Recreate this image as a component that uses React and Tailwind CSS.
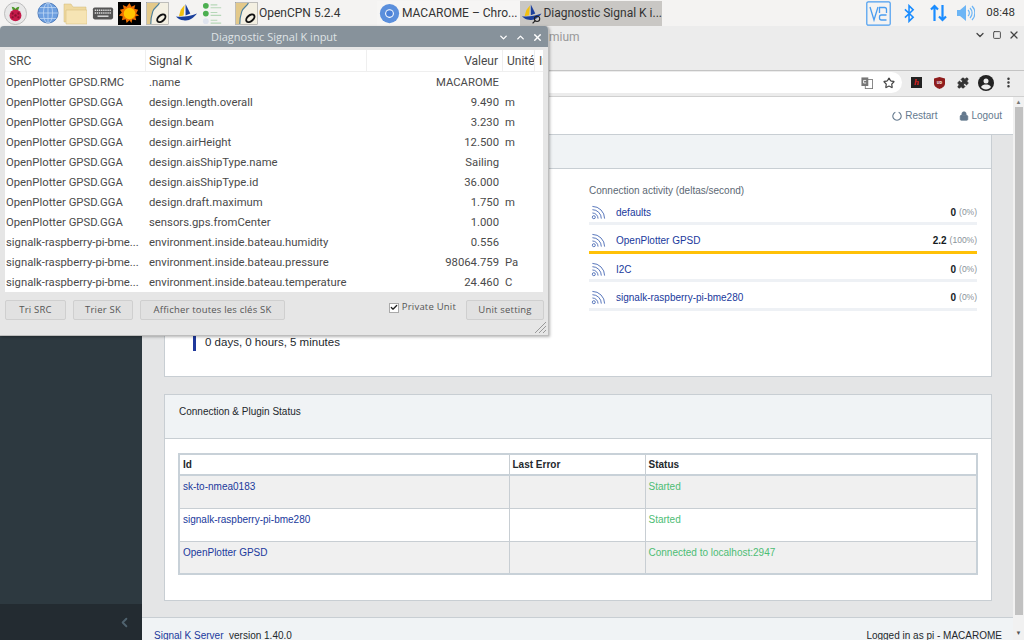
import React from 'react';
import { ChevronDown, ChevronUp, X, Square, Star, Puzzle, EllipsisVertical, Lock, ChevronLeft, Check } from 'lucide-react';

const rows = [
  ['OpenPlotter GPSD.RMC', '.name', 'MACAROME', ''],
  ['OpenPlotter GPSD.GGA', 'design.length.overall', '9.490', 'm'],
  ['OpenPlotter GPSD.GGA', 'design.beam', '3.230', 'm'],
  ['OpenPlotter GPSD.GGA', 'design.airHeight', '12.500', 'm'],
  ['OpenPlotter GPSD.GGA', 'design.aisShipType.name', 'Sailing', ''],
  ['OpenPlotter GPSD.GGA', 'design.aisShipType.id', '36.000', ''],
  ['OpenPlotter GPSD.GGA', 'design.draft.maximum', '1.750', 'm'],
  ['OpenPlotter GPSD.GGA', 'sensors.gps.fromCenter', '1.000', ''],
  ['signalk-raspberry-pi-bme...', 'environment.inside.bateau.humidity', '0.556', ''],
  ['signalk-raspberry-pi-bme...', 'environment.inside.bateau.pressure', '98064.759', 'Pa'],
  ['signalk-raspberry-pi-bme...', 'environment.inside.bateau.temperature', '24.460', 'C'],
];

const activity = [
  ['defaults', '0', '(0%)', false],
  ['OpenPlotter GPSD', '2.2', '(100%)', true],
  ['I2C', '0', '(0%)', false],
  ['signalk-raspberry-pi-bme280', '0', '(0%)', false],
];

const plugins = [
  ['sk-to-nmea0183', 'Started', 'bg-[#f0f0f0]'],
  ['signalk-raspberry-pi-bme280', 'Started', 'bg-white'],
  ['OpenPlotter GPSD', 'Connected to localhost:2947', 'bg-[#f0f0f0]'],
];

function ChartIcon({ className }) {
  return (
    <svg viewBox="0 0 24 24" className={className}>
      <rect x="0.5" y="0.5" width="23" height="23" fill="#f4f0e2" stroke="#888" strokeWidth="0.5" />
      <path d="M1 1h13c-2 4-6 5-7 9-1 3-2 8-2 13H1z" fill="#e3c98a" />
      <path d="M14 1c-2 4-6 5-7 9-1 3-2 8-2 13" fill="none" stroke="#4c7f9c" strokeWidth="1.2" />
      <ellipse cx="16" cy="17" rx="5" ry="3" transform="rotate(-40 16 17)" fill="none" stroke="#111" strokeWidth="2" />
    </svg>
  );
}

function BoatIcon({ className, lens }) {
  return (
    <svg viewBox="0 0 24 24" className={className}>
      <path d="M10 3L9 14l-5 1 2-7z" fill="#f2c010" />
      <path d="M11 2l5 10-5 2z" fill="#1a3f9c" />
      <path d="M1 15c6 1 14 0 22-3-4 5-8 8-14 7-3 0-6-2-8-4z" fill="#1a3f9c" />
      {lens && <circle cx="18" cy="18" r="3" fill="none" stroke="#222" strokeWidth="1.2" />}
      {lens && <path d="M16 20l-3 3" stroke="#222" strokeWidth="1.4" />}
    </svg>
  );
}

function FeedIcon() {
  return (
    <svg viewBox="0 0 16 16" className="w-[15px] h-[15px] ml-[2px] mr-[10px] text-[#4f6fb8]" fill="none" stroke="currentColor" strokeWidth="1">
      <circle cx="3" cy="13" r="1.6" />
      <path d="M1.5 8.5a6 6 0 0 1 6 6" />
      <path d="M1.5 5a9.5 9.5 0 0 1 9.500 9.500" />
      <path d="M1.5 1.500a13 13 0 0 1 13 13" />
    </svg>
  );
}

function Taskbar() {
  return (
    <div className="h-[26px] bg-[#f4f3f2] flex items-center pl-[4px] text-[#333] font-['Roboto',sans-serif] text-[12px] whitespace-nowrap">
      <svg viewBox="0 0 24 24" className="w-[23px] h-[23px] mr-[10px]">
        <circle cx="12" cy="12" r="11.500" fill="#e8e8e8" stroke="#bbb" />
        <path d="M8 5c2 0 3 1 4 2 1-1 2-2 4-2l-1 3-3 1-3-1z" fill="#4c9a2a" />
        <circle cx="12" cy="14" r="6.200" fill="#c51a4a" />
        <circle cx="12" cy="14" r="1.300" fill="#8a0f30" />
        <circle cx="9" cy="12" r="1.200" fill="#8a0f30" />
        <circle cx="15" cy="12" r="1.200" fill="#8a0f30" />
        <circle cx="9" cy="16" r="1.200" fill="#8a0f30" />
        <circle cx="15" cy="16" r="1.200" fill="#8a0f30" />
      </svg>
      <svg viewBox="0 0 24 24" className="w-[22px] h-[22px] mr-[4px]">
        <circle cx="12" cy="12" r="11" fill="#6d9fe0" stroke="#4a78b8" />
        <path d="M1 12h22M12 1v22M3 6h18M3 18h18" stroke="#c6dbf5" strokeWidth="0.8" fill="none" />
        <ellipse cx="12" cy="12" rx="5" ry="11" fill="none" stroke="#c6dbf5" strokeWidth="0.8" />
      </svg>
      <svg viewBox="0 0 24 24" className="w-[24px] h-[24px] mr-[5px]">
        <path d="M1 3h7l2 3h13v15H1z" fill="#efd9a0" stroke="#d0b878" strokeWidth="0.5" />
        <path d="M3 9h21v14H3z" fill="#f6e4b4" stroke="#d0b878" strokeWidth="0.5" />
      </svg>
      <svg viewBox="0 0 24 24" className="w-[22px] h-[22px] mr-[4px]">
        <rect x="1" y="6" width="22" height="13" rx="2" fill="#555" />
        <path d="M3 9h18M3 12h18" stroke="#ddd" strokeWidth="1.600" strokeDasharray="1.500 0.800" />
        <path d="M6 15.500h12" stroke="#ddd" strokeWidth="1.600" />
      </svg>
      <svg viewBox="0 0 24 24" className="w-[23px] h-[23px] mr-[5px] bg-black">
        <path d="M12 1l2 4 4-2-1 4 4 1-2 4 3 2-4 1 1 4-4-1-1 4-2-3-3 3-1-4-4 1 1-4-4-1 3-3-2-3 4-1-1-4 4 2z" fill="#f07000" />
        <circle cx="12" cy="12" r="6" fill="#ffc400" />
      </svg>
      <ChartIcon className="w-[23px] h-[23px] mr-[6px]" />
      <BoatIcon className="w-[23px] h-[23px] mr-[4px]" />
      <svg viewBox="0 0 24 24" className="w-[23px] h-[23px] mr-[10px]">
        <circle cx="4" cy="4" r="3" fill="#4caf50" />
        <circle cx="4" cy="12" r="3" fill="#4caf50" />
        <circle cx="4" cy="20" r="3" fill="#dfe4ee" />
        <path d="M9 3h7M9 6h11M9 11h7M9 14h11M9 19h7M9 22h11" stroke="#b6d7b8" strokeWidth="1.200" />
      </svg>
      <div className="flex items-center h-[25px] w-[142px]">
        <ChartIcon className="w-[23px] h-[23px] mr-px" />
        <span>OpenCPN 5.2.4</span>
      </div>
      <div className="flex items-center h-[25px] w-[143px] pl-[2px] bg-[#f6f5f4]">
        <svg viewBox="0 0 24 24" className="w-[21px] h-[21px] mr-[2px]">
          <circle cx="12" cy="12" r="11" fill="#5b8fdc" />
          <circle cx="12" cy="12" r="5" fill="#fff" />
          <circle cx="12" cy="12" r="3.800" fill="#4a80d8" />
        </svg>
        <span>MACAROME – Chro...</span>
      </div>
      <div className="flex items-center h-[25px] w-[142px] pl-px bg-[#c9c7c4]">
        <BoatIcon lens className="w-[23px] h-[23px] mr-px" />
        <span>Diagnostic Signal K i...</span>
      </div>
      <div className="ml-auto flex items-center">
        <svg viewBox="0 0 25 25" className="w-[25px] h-[25px] mr-[13px] text-[#4a9df0]" fill="none" stroke="currentColor">
          <rect x="0.800" y="0.800" width="23.400" height="23.400" rx="1.500" strokeWidth="1.200" />
          <path d="M4 6l4 13 4-13" strokeWidth="1.300" />
          <path d="M13.500 12V6.500h5c1.500 0 2 1 2 2V12" strokeWidth="1.300" />
          <path d="M20.500 14h-5c-1.500 0-2 1-2 2v1c0 1 .5 2 2 2h5" strokeWidth="1.300" />
        </svg>
        <svg viewBox="0 0 12 20" className="w-[11px] h-[19px] mr-[15px] text-[#1a8cff]" fill="none" stroke="currentColor" strokeWidth="1.700">
          <path d="M1 5.500l9 8.500-4.500 4.500V1.500L10 6l-9 8.500" />
        </svg>
        <svg viewBox="0 0 17 18" className="w-[17px] h-[18px] mr-[9px] text-[#1a8cff]" fill="none" stroke="currentColor" strokeWidth="2.200">
          <path d="M4.500 17V2M1 5.500l3.500-3.500L8 5.500" />
          <path d="M12.500 1v15M9 12.500l3.500 3.500 3.500-3.500" />
        </svg>
        <svg viewBox="0 0 19 18" className="w-[19px] h-[18px] mr-[11px] text-[#6cb5f5]" fill="none" stroke="currentColor" strokeWidth="1.200">
          <path d="M1 6h3l6-5v16l-6-5H1z" fill="currentColor" stroke="none" />
          <path d="M12 6a4 4 0 0 1 0 6M14 4a7 7 0 0 1 0 10M16 2a10 10 0 0 1 0 14" />
        </svg>
        <span className="text-[11.5px] mr-[9px]">08:48</span>
      </div>
    </div>
  );
}

function ChromeTop() {
  return (
    <div className="h-[71px] bg-[#ececec] flex flex-col">
      <div className="h-[44px] flex items-start pt-[3px] pr-[4px] gap-[5px] text-[#444] font-['Roboto',sans-serif]">
        <span className="pl-[549px] mr-auto text-[12px] leading-[14px] mt-px text-[#999]">mium</span>
        <ChevronDown size={12} strokeWidth={2.500} />
        <Square size={12} strokeWidth={2.500} className="scale-75" />
        <X size={12} strokeWidth={2.500} />
      </div>
      <div className="flex-1 border-t border-[#c4c4c4] border-b border-b-[#d0d0d0] flex items-start pt-px pr-[4px] text-[#333]">
        <div className="flex-1 h-[21px] bg-white rounded-r-full ml-[549px] mr-[3px] flex items-center justify-end pr-[7px]">
          <svg viewBox="0 0 14 14" className="w-[12px] h-[12px] mr-[10px]">
            <rect x="5" y="3" width="8.500" height="10.500" fill="#fff" stroke="#777" />
            <rect x="0.500" y="0.500" width="8" height="10" fill="#777" />
            <path d="M6 4H3v3h3" fill="none" stroke="#fff" />
          </svg>
          <Star size={12} strokeWidth={2.400} className="text-[#444]" />
        </div>
        <div className="w-[23px] h-[21px] flex items-center justify-center">
          <div className="w-[11px] h-[11px] bg-[#222] flex items-center justify-center text-[#d22] text-[9px] leading-none italic font-bold font-['Liberation_Serif',serif]">h</div>
        </div>
        <div className="w-[23px] h-[21px] flex items-center justify-center">
          <svg viewBox="0 0 12 13" className="w-[11px] h-[12px]">
            <path d="M0 1.500L6 0l6 1.500V7c0 3-3 5-6 6-3-1-6-3-6-6z" fill="#8f1d1d" />
            <text x="6" y="7.500" textAnchor="middle" fontSize="4" fontWeight="700" fill="#fff">UD</text>
          </svg>
        </div>
        <div className="w-[23px] h-[21px] flex items-center justify-center">
          <Puzzle size={12} fill="#333" />
        </div>
        <div className="w-[23px] h-[21px] flex items-center justify-center">
          <svg viewBox="0 0 16 16" className="w-[16px] h-[16px]">
            <circle cx="8" cy="8" r="8" fill="#222" />
            <circle cx="8" cy="6" r="2.500" fill="#ececec" />
            <path d="M3 12c1-2 3-2.500 5-2.500s4 .5 5 2.500c-1 1.500-3 2.500-5 2.500S4 13.500 3 12z" fill="#ececec" />
          </svg>
        </div>
        <div className="w-[23px] h-[21px] flex items-center justify-center">
          <EllipsisVertical size={13} strokeWidth={2.600} />
        </div>
      </div>
    </div>
  );
}

function Activity() {
  return (
    <div className="w-[388px] text-[10px]">
      <div className="text-[#5c6873] mb-[3px]">Connection activity (deltas/second)</div>
      {activity.map(([name, value, pct, full]) => (
        <div key={name} className="mb-[4.500px]">
          <div className="h-[22px] flex items-center">
            <FeedIcon />
            <span className="text-[#20399c] text-[10px] flex-1">{name}</span>
            <b className="text-[#151b1e] text-[10px] mr-[3px]">{value}</b>
            <span className="text-[#8a9299] text-[8.500px]">{pct}</span>
          </div>
          <div className={`h-[3px] mt-[-1px] ${full ? 'bg-[#ffc107]' : 'bg-[#eef1f5]'}`} />
        </div>
      ))}
    </div>
  );
}

function Page() {
  return (
    <div className="flex-1 flex min-h-0 font-['Liberation_Sans',sans-serif]">
      <aside className="w-[142px] bg-[#2d3940] flex flex-col justify-end">
        <div className="h-[36px] bg-[#232b31] flex items-center justify-end pr-[10px]">
          <ChevronLeft size={15} strokeWidth={3} className="text-[#4f626e]" />
        </div>
      </aside>
      <main className="flex-1 bg-[#e4e5e6] flex flex-col min-w-0">
        <div className="h-[38px] bg-white border-b border-[#c8ced3] flex items-center justify-end pr-[11px] text-[10px] text-[#64798e]">
          <svg viewBox="0 0 12 12" className="w-[10px] h-[10px] mr-[3px]" fill="none" stroke="currentColor" strokeWidth="1.300">
            <path d="M4 1.500a5 5 0 1 0 4 0" />
          </svg>
          <span className="mr-[22px]">Restart</span>
          <Lock size={10} fill="#64798e" className="mr-[2px]" />
          <span>Logout</span>
        </div>
        <div className="flex-1 pl-[22px] pr-[21px] min-h-0">
          <div className="h-[242px] bg-white border border-t-0 border-[#c8ced3]">
            <div className="h-[34px] bg-[#f0f3f5] border-b border-[#c8ced3]" />
            <div className="pl-[424px] pt-[14px] relative h-[207px]">
              <Activity />
              <div className="absolute left-[28px] top-[165px] border-l-[3px] border-[#20399c] pl-[9px] h-[17px] flex items-center text-[11.500px] text-[#23282c]">0 days, 0 hours, 5 minutes</div>
            </div>
          </div>
          <div className="mt-[17px] h-[207px] bg-white border border-[#c8ced3]">
            <div className="h-[44px] bg-[#f0f3f5] border-b border-[#c8ced3] px-[14px] pt-[11px] text-[10px] leading-[12px] text-[#23282c]">Connection &amp; Plugin Status</div>
            <div className="px-[13px] pt-[14px]">
              <table className="w-full border-collapse border-2 border-[#c8d1d8] text-[10px] table-fixed">
                <thead>
                  <tr className="h-[21px] border-b-2 border-[#c8d1d8] text-[#23282c]">
                    <th className="w-[330px] text-left font-bold px-[3px] border-r border-[#c8ced3]">Id</th>
                    <th className="w-[136px] text-left font-bold px-[3px] border-r border-[#c8ced3]">Last Error</th>
                    <th className="text-left font-bold px-[3px]">Status</th>
                  </tr>
                </thead>
                <tbody>
                  {plugins.map(([id, status, bg]) => (
                    <tr key={id} className={`h-[33px] border-b border-[#c8ced3] align-top ${bg}`}>
                      <td className="px-[3px] pt-[3px] text-[#20399c] border-r border-[#c8ced3]">{id}</td>
                      <td className="border-r border-[#c8ced3]" />
                      <td className="px-[3px] pt-[3px] text-[#4dbd74]">{status}</td>
                    </tr>
                  ))}
                </tbody>
              </table>
            </div>
          </div>
        </div>
        <div className="h-[23px] bg-[#f0f3f5] border-t border-[#c8ced3] flex justify-between pl-[12px] pr-[11px] pt-[12px] text-[10px] leading-[12px] text-[#23282c] overflow-hidden">
          <span><span className="text-[#20399c]">Signal K Server</span>&nbsp; version 1.40.0</span>
          <span>Logged in as pi - MACAROME</span>
        </div>
      </main>
      <div className="w-[11px] bg-[#f1f1f1] flex flex-col items-center">
        <div className="h-[10px] text-[#777] text-[6px] leading-[10px]">▲</div>
        <div className="w-[8px] flex-1 bg-[#c1c1c1]" />
        <div className="h-[25px] text-[#555] text-[6px] leading-[6px] pt-[15px]">▼</div>
      </div>
    </div>
  );
}

function DialogWindow() {
  return (
    <div className="absolute left-0 top-[26px] w-[549px] h-[310px] bg-[#e6e6e6] rounded-t-[4px] border-b border-r border-[#bdbdbd] shadow-[1px_1px_3px_rgba(0,0,0,0.3)] font-['Open_Sans',sans-serif] flex flex-col overflow-hidden">
      <div className="h-[21px] bg-[#87929b] flex items-center justify-center pt-px text-[#dfe3e6] text-[11px] relative">
        Diagnostic Signal K input
        <div className="absolute right-[5px] flex gap-[6px] text-white">
          <ChevronDown size={11} strokeWidth={3} />
          <ChevronUp size={11} strokeWidth={3} />
          <X size={11} strokeWidth={3} />
        </div>
      </div>
      <div className="mx-[5px] mt-[3px] h-[242px] bg-white overflow-hidden font-['Roboto',sans-serif] text-[11.300px] text-[#4a4a4a]">
        <div className="h-[22px] flex items-center border-b border-[#efefef] text-[12px]">
          <div className="w-[141px] shrink-0 pl-[4px] pt-px h-full flex items-center border-r border-[#efefef]">SRC</div>
          <div className="w-[221px] shrink-0 pl-[3px] pt-px h-full flex items-center border-r border-[#efefef]">Signal K</div>
          <div className="w-[136px] shrink-0 pr-[4px] pt-px h-full flex items-center justify-end border-r border-[#efefef]">Valeur</div>
          <div className="w-[32px] shrink-0 pl-[4px] pt-px h-full flex items-center border-r border-[#efefef] whitespace-nowrap overflow-hidden">Unité</div>
          <div className="pl-[4px] pt-px overflow-hidden">In</div>
        </div>
        {rows.map(([src, key, val, unit]) => (
          <div key={key} className="h-[20px] pt-[3px] flex items-center">
            <div className="w-[141px] shrink-0 pl-px whitespace-nowrap overflow-hidden">{src}</div>
            <div className="w-[221px] shrink-0 pl-[3px] whitespace-nowrap">{key}</div>
            <div className="w-[136px] shrink-0 pr-[4px] text-right">{val}</div>
            <div className="pl-[2px]">{unit}</div>
          </div>
        ))}
      </div>
      <div className="flex items-start pl-[5px] pt-[8px] text-[9.500px] text-[#555] tracking-[0.2px]">
        <button className="w-[61px] h-[20px] bg-[#e1e1e1] border border-[#cfcfcf] rounded-[2px] mr-[7px]">Tri SRC</button>
        <button className="w-[60px] h-[20px] bg-[#e1e1e1] border border-[#cfcfcf] rounded-[2px] mr-[7px]">Trier SK</button>
        <button className="w-[145px] h-[20px] bg-[#e1e1e1] border border-[#cfcfcf] rounded-[2px]">Afficher toutes les clés SK</button>
        <div className="ml-auto flex items-center mr-[10px] h-[15px]">
          <span className="w-[10px] h-[10px] bg-white border border-[#aaa] flex items-center justify-center mr-[3px]"><Check size={9} strokeWidth={4} className="text-[#222]" /></span>
          Private Unit
        </div>
        <button className="w-[78px] h-[20px] bg-[#e1e1e1] border border-[#cfcfcf] rounded-[2px] mr-[4px]">Unit setting</button>
      </div>
      <svg viewBox="0 0 12 12" className="absolute right-[2px] bottom-[2px] w-[12px] h-[12px]">
        <path d="M1 12L12 1M5 12l7-7M9 12l3-3" stroke="#999" strokeWidth="1" />
      </svg>
    </div>
  );
}

export default function App() {
  return (
    <div className="relative w-[1024px] h-[640px] overflow-hidden flex flex-col bg-white">
      <Taskbar />
      <ChromeTop />
      <Page />
      <DialogWindow />
    </div>
  );
}
